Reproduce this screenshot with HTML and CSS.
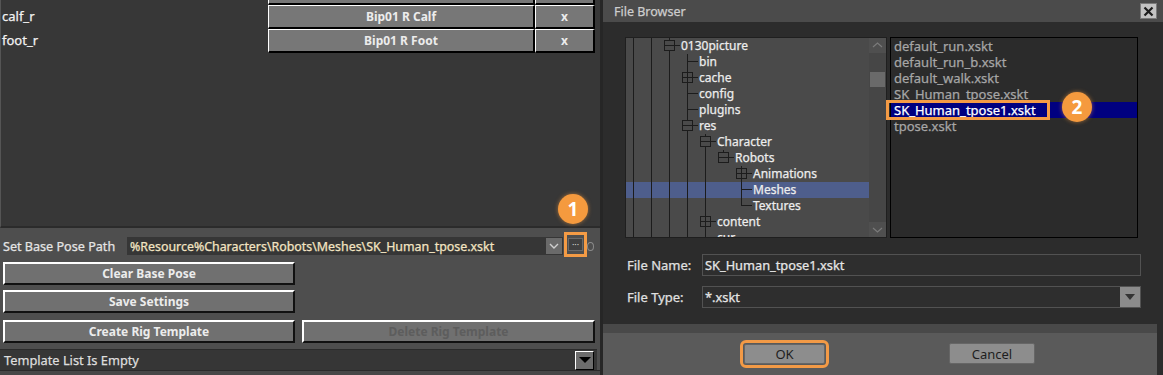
FILE: index.html
```html
<!DOCTYPE html>
<html lang="en">

<head>
    <meta charset="UTF-8">
    <title>Rig Settings - File Browser</title>
    <link rel="stylesheet" href="styles.css">
</head>

<body>
    <div class="app">

        <!-- Left: rig mapping panel -->
        <div class="rig-panel">
            <div class="bone-list">
                <div class="bone-row stub">
                    <span class="bone-name"></span>
                    <span class="cell bone-target"></span>
                    <span class="cell bone-remove"></span>
                </div>
                <div class="bone-row">
                    <span class="bone-name">calf_r</span>
                    <button class="cell bone-target">Bip01 R Calf</button>
                    <button class="cell bone-remove">x</button>
                </div>
                <div class="bone-row">
                    <span class="bone-name">foot_r</span>
                    <button class="cell bone-target">Bip01 R Foot</button>
                    <button class="cell bone-remove">x</button>
                </div>
            </div>

            <div class="pose-controls">
                <div class="path-row">
                    <label class="path-label">Set Base Pose Path</label>
                    <div class="path-field">
                        <span class="path-text">%Resource%Characters\Robots\Meshes\SK_Human_tpose.xskt</span>
                        <span class="combo-btn">
                            <svg width="14" height="14" viewBox="0 0 14 14"><polyline points="3,5 7,9 11,5" fill="none" stroke="#d0d0d0" stroke-width="1.4"/></svg>
                        </span>
                    </div>
                    <span class="callout"><button class="browse-btn">&middot;&middot;&middot;</button></span>
                    <span class="ring"></span>
                </div>

                <button class="action-btn clear-btn">Clear Base Pose</button>
                <button class="action-btn save-btn">Save Settings</button>
                <div class="btn-pair">
                    <button class="action-btn">Create Rig Template</button>
                    <button class="action-btn disabled">Delete Rig Template</button>
                </div>

                <div class="template-combo">
                    <span>Template List Is Empty</span>
                    <span class="combo-drop"></span>
                </div>
                <div class="panel-foot"></div>
            </div>

            <span class="badge badge-one">1</span>
        </div>

        <!-- Right: file browser dialog -->
        <div class="file-dialog">
            <div class="title-bar">
                <span class="title">File Browser</span>
                <span class="close-btn">
                    <svg width="11" height="11" viewBox="0 0 11 11"><path d="M1.5 1.5 L9.5 9.5 M9.5 1.5 L1.5 9.5" stroke="#1c1c1c" stroke-width="2.2"/></svg>
                </span>
            </div>

            <div class="dialog-body">
                <div class="panes">
                    <div class="tree-pane">
                        <div class="tree-body">
                            <div class="tree-row"><i class="g pipe"></i><i class="g pipe"></i><i class="g tee"><b class="toggle"></b></i><span class="node">0130picture</span></div>
                            <div class="tree-row"><i class="g pipe"></i><i class="g pipe"></i><i class="g pipe"></i><i class="g tee"></i><span class="node">bin</span></div>
                            <div class="tree-row"><i class="g pipe"></i><i class="g pipe"></i><i class="g pipe"></i><i class="g tee"><b class="toggle plus"></b></i><span class="node">cache</span></div>
                            <div class="tree-row"><i class="g pipe"></i><i class="g pipe"></i><i class="g pipe"></i><i class="g tee"></i><span class="node">config</span></div>
                            <div class="tree-row"><i class="g pipe"></i><i class="g pipe"></i><i class="g pipe"></i><i class="g tee"></i><span class="node">plugins</span></div>
                            <div class="tree-row"><i class="g pipe"></i><i class="g pipe"></i><i class="g pipe"></i><i class="g tee"><b class="toggle"></b></i><span class="node">res</span></div>
                            <div class="tree-row"><i class="g pipe"></i><i class="g pipe"></i><i class="g pipe"></i><i class="g pipe"></i><i class="g tee"><b class="toggle"></b></i><span class="node">Character</span></div>
                            <div class="tree-row"><i class="g pipe"></i><i class="g pipe"></i><i class="g pipe"></i><i class="g pipe"></i><i class="g pipe"></i><i class="g elbow"><b class="toggle"></b></i><span class="node">Robots</span></div>
                            <div class="tree-row"><i class="g pipe"></i><i class="g pipe"></i><i class="g pipe"></i><i class="g pipe"></i><i class="g pipe"></i><i class="g"></i><i class="g tee"><b class="toggle plus"></b></i><span class="node">Animations</span></div>
                            <div class="tree-row selected"><i class="g pipe"></i><i class="g pipe"></i><i class="g pipe"></i><i class="g pipe"></i><i class="g pipe"></i><i class="g"></i><i class="g tee"></i><span class="node">Meshes</span></div>
                            <div class="tree-row"><i class="g pipe"></i><i class="g pipe"></i><i class="g pipe"></i><i class="g pipe"></i><i class="g pipe"></i><i class="g"></i><i class="g elbow"></i><span class="node">Textures</span></div>
                            <div class="tree-row"><i class="g pipe"></i><i class="g pipe"></i><i class="g pipe"></i><i class="g pipe"></i><i class="g tee"><b class="toggle plus"></b></i><span class="node">content</span></div>
                            <div class="tree-row"><i class="g pipe"></i><i class="g pipe"></i><i class="g pipe"></i><i class="g pipe"></i><i class="g tee"></i><span class="node">cur</span></div>
                        </div>
                        <div class="scrollbar">
                            <span class="scroll-arrow">
                                <svg width="15" height="15" viewBox="0 0 15 15"><polyline points="3,9 7.5,5 12,9" fill="none" stroke="#7a7a7a" stroke-width="1.2"/></svg>
                            </span>
                            <span class="scroll-thumb"></span>
                            <span class="scroll-arrow bottom">
                                <svg width="15" height="15" viewBox="0 0 15 15"><polyline points="3,6 7.5,10 12,6" fill="none" stroke="#7a7a7a" stroke-width="1.2"/></svg>
                            </span>
                        </div>
                    </div>

                    <div class="file-pane">
                        <div class="file-row">default_run.xskt</div>
                        <div class="file-row">default_run_b.xskt</div>
                        <div class="file-row">default_walk.xskt</div>
                        <div class="file-row">SK_Human_tpose.xskt</div>
                        <div class="file-row selected">SK_Human_tpose1.xskt
                            <span class="callout-box"></span>
                            <span class="badge badge-two">2</span>
                        </div>
                        <div class="file-row">tpose.xskt</div>
                    </div>
                </div>

                <div class="form-row first">
                    <label class="form-label">File Name:</label>
                    <input class="field" type="text" value="SK_Human_tpose1.xskt">
                </div>
                <div class="form-row">
                    <label class="form-label">File Type:</label>
                    <div class="field type-combo">
                        <span>*.xskt</span>
                        <span class="type-drop"></span>
                    </div>
                </div>
            </div>

            <div class="dialog-footer">
                <button class="dlg-btn ok-btn">OK</button>
                <button class="dlg-btn cancel-btn">Cancel</button>
            </div>
        </div>
    </div>
</body>

</html>
```

FILE: styles.css
```css
* {
    margin: 0;
    padding: 0;
    box-sizing: border-box;
}

body {
    font-family: "Noto Sans", "DejaVu Sans", sans-serif;
    font-size: 12px;
    background-color: #2a2a2a;
    color: #e6e6e6;
}

button,
input {
    font-family: inherit;
}

/* the app draws its labels a touch heavier than a plain regular weight */
.bone-name,
.path-label,
.path-text,
.template-combo,
.title,
.node,
.file-row,
.form-label,
.field {
    -webkit-text-stroke: 0.25px currentColor;
}

.app {
    display: flex;
    width: 1163px;
    height: 375px;
    overflow: hidden;
}

/* ---------- Left rig panel ---------- */
.rig-panel {
    width: 600px;
    display: flex;
    flex-direction: column;
    position: relative;
}

.bone-list {
    height: 228px;
    background-color: #373737;
    border-left: 1px solid #555;
    border-bottom: 2px solid #2b2b2b;
}

.bone-row {
    display: flex;
    height: 24px;
}

.bone-row.stub {
    height: 5px;
}

.bone-name {
    width: 267px;
    padding-left: 1px;
    font-size: 13px;
    line-height: 22px;
    color: #f2f2f2;
}

.cell {
    height: 24px;
    padding: 0;
    background-color: #777;
    border-style: solid;
    border-width: 1px 2px 2px 1px;
    border-color: #fff #000 #000 #fff;
    font-size: 12px;
    font-weight: bold;
    color: #ececec;
    text-align: center;
}

.stub .cell {
    height: 5px;
    border-top-width: 0;
}

.bone-target {
    width: 267px;
}

.bone-remove {
    width: 60px;
}

.pose-controls {
    flex: 1;
    display: flex;
    flex-direction: column;
    padding-left: 3px;
    background-color: #4e4e4e;
}

.path-row {
    display: flex;
    align-items: center;
    height: 18px;
    margin-top: 9px;
}

.path-label {
    width: 124px;
    font-size: 12.6px;
    color: #e4e4e4;
}

.path-field {
    display: flex;
    align-items: center;
    width: 436px;
    height: 18px;
    padding-left: 3px;
    background-color: #363636;
}

.path-text {
    flex: 1;
    white-space: nowrap;
    overflow: hidden;
    font-size: 12.4px;
    color: #f3e4c2;
}

.combo-btn {
    display: flex;
    align-items: center;
    justify-content: center;
    width: 16px;
    height: 16px;
    margin-right: 1px;
    background-color: #6a6a6a;
}

/* orange annotation frame round the browse button */
.callout {
    display: flex;
    align-items: center;
    justify-content: center;
    align-self: flex-start;
    width: 23px;
    height: 25px;
    margin-top: -5px;
    margin-left: 1px;
    border: 3px solid #f49b45;
}

.browse-btn {
    width: 15px;
    height: 13px;
    background-color: #404040;
    border: 1px solid #6a6a6a;
    color: #cfcfcf;
    font-size: 9px;
    line-height: 10px;
}

.ring {
    width: 7px;
    height: 9px;
    border: 1px solid #8a8a8a;
    border-radius: 50%;
}

.action-btn {
    width: 292px;
    height: 23px;
    background-color: #707070;
    border-style: solid;
    border-width: 2px;
    border-color: #fff #111 #111 #fff;
    font-size: 12px;
    font-weight: bold;
    color: #ececec;
}

.clear-btn {
    margin-top: 7px;
}

.save-btn {
    margin-top: 5px;
}

.btn-pair {
    display: flex;
    gap: 7px;
    margin-top: 7px;
}

.action-btn.disabled {
    width: 293px;
    color: #5d5d5d;
}

.template-combo {
    display: flex;
    align-items: center;
    width: 597px;
    height: 21px;
    margin-top: 6px;
    margin-left: -3px;
    padding-left: 4px;
    background-color: #363636;
    border-top: 1px solid #2b2b2b;
    font-size: 12.8px;
    color: #dedede;
}

.combo-drop {
    margin-left: auto;
    margin-right: 3px;
    width: 19px;
    height: 19px;
    background-color: #6c6c6c;
    border-style: solid;
    border-width: 1px;
    border-color: #fff #000 #000 #fff;
    display: flex;
    align-items: center;
    justify-content: center;
    -webkit-text-stroke: 0;
}

.combo-drop::after {
    content: "";
    border-left: 6px solid transparent;
    border-right: 6px solid transparent;
    border-top: 6px solid #000;
}

.panel-foot {
    flex: 1;
    margin-left: -3px;
    border-top: 1px solid #2a2a2a;
    background-color: #474747;
}

/* numbered step markers */
.badge {
    position: absolute;
    width: 30px;
    height: 30px;
    border-radius: 50%;
    background-color: #f59a3e;
    color: #fff;
    font-size: 19px;
    font-weight: bold;
    line-height: 30px;
    text-align: center;
    box-shadow: 0 0 4px rgba(245, 154, 62, 0.6);
    -webkit-text-stroke: 0;
    z-index: 5;
}

.badge-one {
    left: 558px;
    top: 194px;
}

/* ---------- File browser dialog ---------- */
.file-dialog {
    flex: 1;
    display: flex;
    flex-direction: column;
    border-left: 3px solid #262626;
    background-color: #2c2c2c;
}

.title-bar {
    display: flex;
    align-items: center;
    height: 22px;
    padding-left: 11px;
    padding-right: 6px;
    background-color: #4b4b4b;
}

.title {
    font-size: 12.5px;
    color: #cdcdcd;
}

.close-btn {
    margin-left: auto;
    display: flex;
    align-items: center;
    justify-content: center;
    width: 17px;
    height: 16px;
    background-color: #c3c3c3;
    border: 1px solid #7a7a7a;
}

.dialog-body {
    height: 302px;
    padding: 15px 0 0 22px;
}

.panes {
    display: flex;
    gap: 3px;
    height: 201px;
}

.tree-pane {
    display: flex;
    width: 262px;
    background-color: #4a4a4a;
    border: 1px solid #1f1f1f;
}

.tree-body {
    flex: 1;
    overflow: hidden;
}

.tree-row {
    display: flex;
    height: 16px;
}

.tree-row.selected {
    background-color: #4e5e8c;
}

/* tree guide cells: 18px wide, line at x=7 */
.g {
    position: relative;
    width: 18px;
    height: 16px;
    flex-shrink: 0;
}

.pipe {
    background: linear-gradient(#1c1c1c, #1c1c1c) 7px 0 / 1px 100% no-repeat;
}

.tee {
    background:
        linear-gradient(#1c1c1c, #1c1c1c) 7px 0 / 1px 100% no-repeat,
        linear-gradient(#1c1c1c, #1c1c1c) 7px 7px / 11px 1px no-repeat;
}

.elbow {
    background:
        linear-gradient(#1c1c1c, #1c1c1c) 7px 0 / 1px 8px no-repeat,
        linear-gradient(#1c1c1c, #1c1c1c) 7px 7px / 11px 1px no-repeat;
}

.toggle {
    position: absolute;
    left: 2px;
    top: 2px;
    width: 11px;
    height: 11px;
    border: 1px solid #1c1c1c;
    background: linear-gradient(#1c1c1c, #1c1c1c) 0 4px / 100% 1px no-repeat, #4a4a4a;
}

.toggle.plus {
    background:
        linear-gradient(#1c1c1c, #1c1c1c) 0 4px / 100% 1px no-repeat,
        linear-gradient(#1c1c1c, #1c1c1c) 4px 0 / 1px 100% no-repeat,
        #4a4a4a;
}

.node {
    padding-left: 1px;
    line-height: 16px;
    white-space: nowrap;
    color: #ededed;
}

.scrollbar {
    display: flex;
    flex-direction: column;
    width: 17px;
    background-color: #464646;
}

.scroll-arrow {
    display: flex;
    align-items: center;
    justify-content: center;
    height: 15px;
    background-color: #4f4f4f;
}

.scroll-arrow.bottom {
    margin-top: auto;
}

.scroll-thumb {
    width: 15px;
    height: 15px;
    margin: 19px 0 0 1px;
    background-color: #6a6a6a;
}

.file-pane {
    width: 248px;
    background-color: #2b2b2b;
    border: 1px solid #000;
}

.file-row {
    position: relative;
    height: 16px;
    padding-left: 3px;
    font-size: 13px;
    line-height: 16px;
    color: #a6a6a6;
    white-space: nowrap;
}

.file-row.selected {
    background-color: #000080;
    color: #fff;
}

.callout-box {
    position: absolute;
    left: -5px;
    top: -2px;
    width: 164px;
    height: 20px;
    border: 3px solid #f49b45;
}

.badge-two {
    left: 171px;
    top: -10px;
}

.form-row {
    display: flex;
    align-items: center;
    height: 22px;
    margin-top: 10px;
}

.form-row.first {
    margin-top: 16px;
}

.form-label {
    width: 77px;
    padding-left: 2px;
    font-size: 13px;
    color: #e0e0e0;
}

.field {
    width: 439px;
    height: 22px;
    padding-left: 2px;
    background-color: #2e2e2e;
    border: 1px solid #525252;
    font-size: 12.8px;
    color: #e6e6e6;
    outline: none;
}

.type-combo {
    display: flex;
    align-items: center;
}

.type-drop {
    margin-left: auto;
    width: 20px;
    height: 20px;
    background-color: #8b8b8b;
    display: flex;
    align-items: center;
    justify-content: center;
}

.type-drop::after {
    content: "";
    border-left: 5px solid transparent;
    border-right: 5px solid transparent;
    border-top: 6px solid #333;
}

.dialog-footer {
    display: flex;
    align-items: flex-start;
    flex: 1;
    margin-right: 6px;
    padding: 10px 0 0 141px;
    background-color: #5a5a5a;
    border-top: 9px solid #494949;
}

.dlg-btn {
    height: 21px;
    background-color: #8d8d8d;
    border: 1px solid #666;
    border-radius: 2px;
    font-size: 13px;
    color: #1e1e1e;
}

.ok-btn {
    width: 81px;
    height: 20px;
    margin-top: 1px;
    outline: 3px solid #f39a46;
    outline-offset: 1px;
}

.cancel-btn {
    width: 86px;
    margin-left: 124px;
}
```
